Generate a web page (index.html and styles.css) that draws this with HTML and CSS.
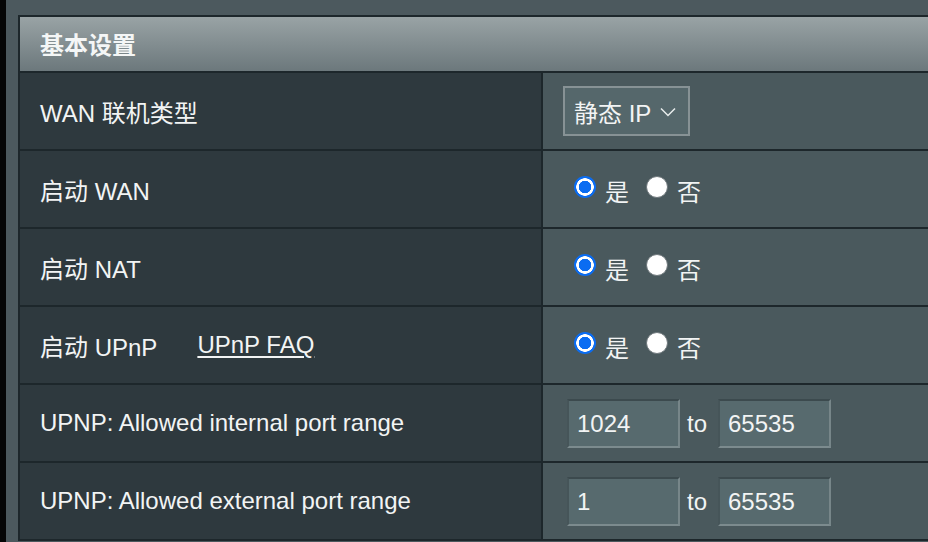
FILE: index.html
```html
<!DOCTYPE html>
<html lang="zh">
<head>
<meta charset="utf-8">
<link rel="stylesheet" href="styles.css">
</head>
<body>
<div class="edge"></div>
<div class="page">
  <div class="table">
    <div class="head">基本设置</div>
    <div class="row">
      <div class="label">WAN 联机类型</div>
      <div class="value">
        <div class="select">静态 IP
          <svg class="chev" width="16" height="10" viewBox="0 0 16 10"><path d="M1 1.5 L8 8.5 L15 1.5" fill="none" stroke="#e8ecec" stroke-width="1.5"/></svg>
        </div>
      </div>
    </div>
    <div class="row">
      <div class="label">启动 WAN</div>
      <div class="value radios">
        <label class="opt"><span class="radio on"></span>是</label>
        <label class="opt"><span class="radio"></span>否</label>
      </div>
    </div>
    <div class="row">
      <div class="label">启动 NAT</div>
      <div class="value radios">
        <label class="opt"><span class="radio on"></span>是</label>
        <label class="opt"><span class="radio"></span>否</label>
      </div>
    </div>
    <div class="row">
      <div class="label">启动 UPnP <a class="faq" href="#">UPnP FAQ</a></div>
      <div class="value radios">
        <label class="opt"><span class="radio on"></span>是</label>
        <label class="opt"><span class="radio"></span>否</label>
      </div>
    </div>
    <div class="row">
      <div class="label">UPNP: Allowed internal port range</div>
      <div class="value ports">
        <div class="field">1024</div><span class="to">to</span><div class="field">65535</div>
      </div>
    </div>
    <div class="row">
      <div class="label">UPNP: Allowed external port range</div>
      <div class="value ports">
        <div class="field">1</div><span class="to">to</span><div class="field">65535</div>
      </div>
    </div>
  </div>
</div>
</body>
</html>
```
FILE: styles.css
```css
html, body {
  margin: 0;
  padding: 0;
  height: 100%;
  overflow: hidden;
}
body {
  background: #4c595e;
  display: flex;
  font-family: "Liberation Sans", Arial, "Noto Sans CJK SC", sans-serif;
  color: #f2f4f4;
  font-size: 24px;
}
.edge {
  width: 6px;
  flex: none;
  background: #050606;
}
.page {
  padding: 15px 0 0 12px;
  flex: 1;
  min-width: 0;
}
.table {
  border-top: 2px solid #1d272b;
  border-left: 2px solid #1d272b;
  background: #1d272b;
}
.head {
  height: 56px;
  display: flex;
  align-items: center;
  padding-left: 20px;
  padding-bottom: 2px;
  box-sizing: border-box;
  font-weight: bold;
  font-size: 24px;
  color: #f4f6f6;
  background: linear-gradient(#99a3a5, #6c787c);
  border-bottom: 2px solid #1d272b;
}
.row {
  display: grid;
  grid-template-columns: 521px 1fr;
  column-gap: 2px;
  height: 76px;
  border-bottom: 2px solid #1d272b;
}
.label {
  background: #2e393e;
  display: flex;
  align-items: center;
  padding-left: 20px;
}
.value {
  background: #4a595d;
  display: flex;
  align-items: center;
}
.select {
  margin-left: 20px;
  border: 2px solid #879295;
  background: #55676b;
  display: flex;
  align-items: center;
  padding-left: 9px;
  box-sizing: border-box;
  width: 127px;
  height: 50px;
  gap: 9px;
}
.chev {
  margin-top: 1px;
}
.radios {
  padding-left: 31px;
  gap: 17px;
}
.opt {
  display: flex;
  align-items: center;
  gap: 9px;
  padding-top: 2px;
}
.radio {
  width: 22px;
  height: 22px;
  border-radius: 50%;
  box-sizing: border-box;
  background: #ffffff;
  border: 1.5px solid #6f787c;
  margin-top: -6px;
}
.radio.on {
  border: none;
  background: radial-gradient(circle, #0a6cf2 0 6px, #ffffff 6.5px 8.5px, #0a6cf2 9px);
}
.faq {
  color: #f2f4f4;
  margin-left: 40px;
  text-decoration: underline;
  text-underline-offset: 3px;
}
.ports {
  padding-left: 24px;
}
.field {
  width: 113px;
  height: 49px;
  box-sizing: border-box;
  background: #576a6e;
  border-style: solid;
  border-width: 2px;
  border-color: #3c4a4e #778689 #7c8b8e #465559;
  display: flex;
  align-items: center;
  padding-left: 8px;
  padding-top: 2px;
}
.to {
  margin: 0 11px 0 7px;
  padding-top: 2px;
}
```
